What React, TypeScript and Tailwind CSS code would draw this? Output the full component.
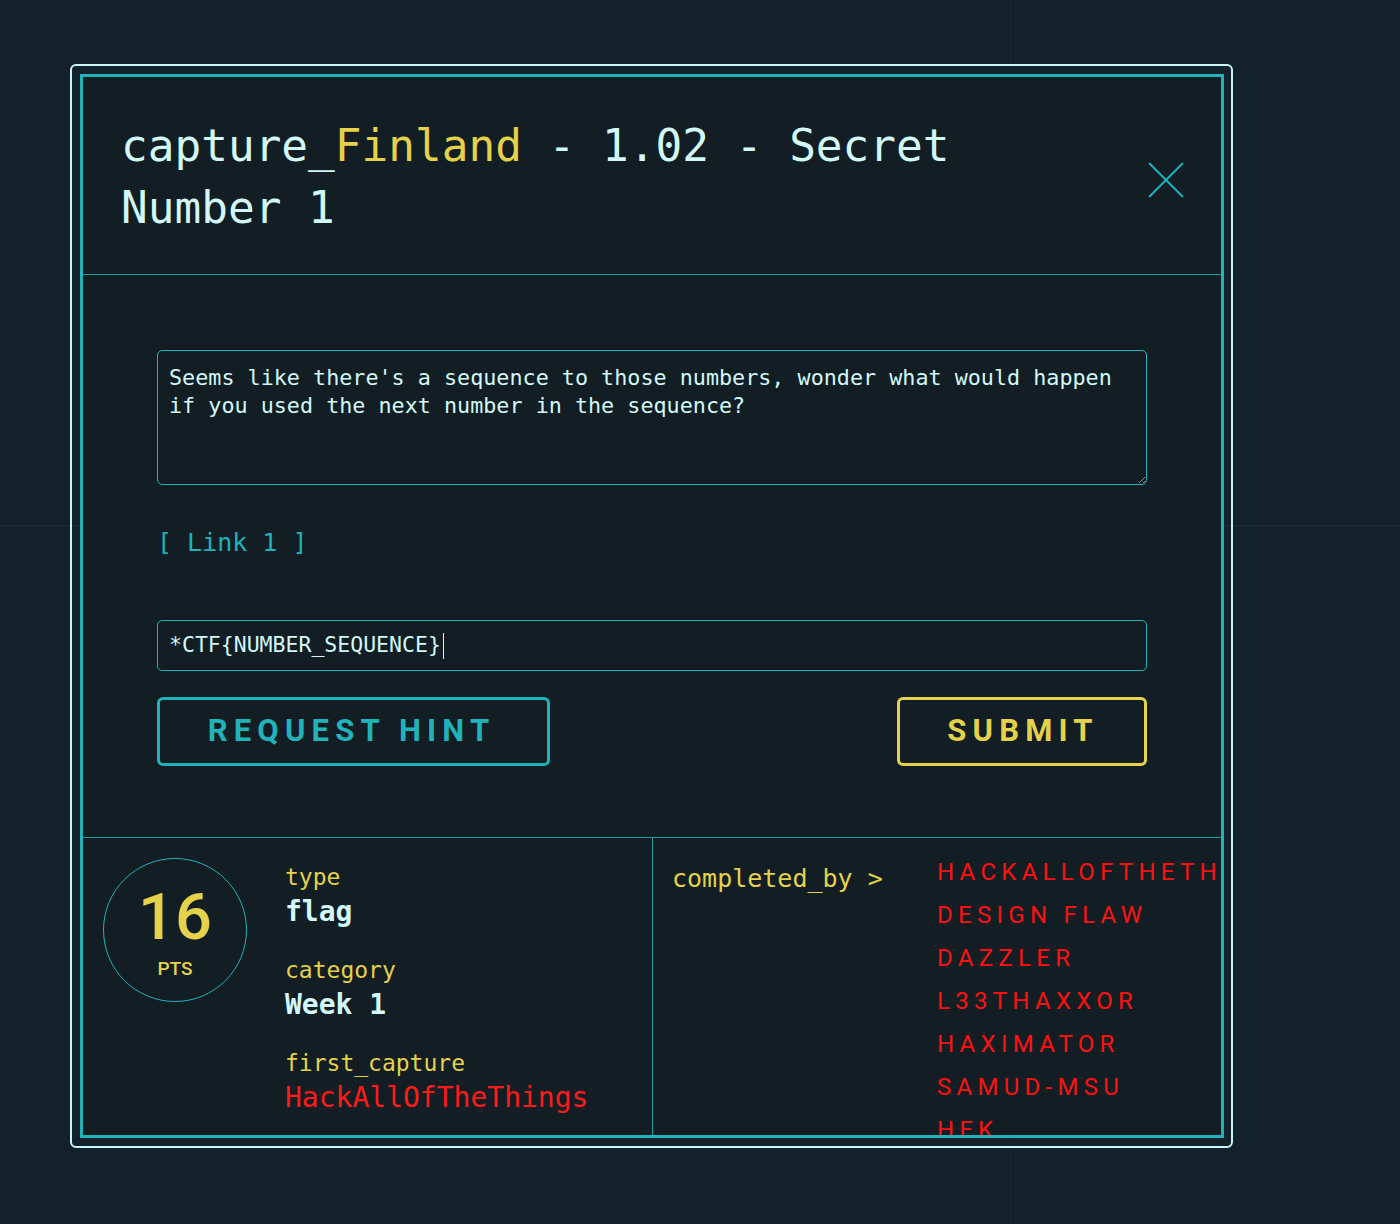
import React from 'react';

const mono = "font-['DejaVu_Sans_Mono','Liberation_Mono',monospace]";
const square = "font-['Roboto','DejaVu_Sans',sans-serif]";

const solvers = ['HACKALLOFTHETHINGS', 'DESIGN FLAW', 'DAZZLER', 'L33THAXXOR', 'HAXIMATOR', 'SAMUD-MSU', 'HFK'];

const InfoRow = ({ label, value, red }: { label: string; value: string; red?: boolean }) => (
  <div className="flex flex-col">
    <span className="text-[23px] leading-[28px] text-[#e6d24a]">{label}</span>
    <span className={`mt-[4px] text-[28px] leading-[34px] ${red ? 'text-[#ff1a1a]' : 'font-semibold text-[#d2f8f8]'}`}>
      {value}
    </span>
  </div>
);

export default function App() {
  return (
    <div
      className={`min-h-[1224px] w-full bg-[#13222a] bg-[linear-gradient(to_right,transparent_1010px,#172830_1010px,#172830_1011px,transparent_1011px),linear-gradient(to_bottom,transparent_525px,#172830_525px,#172830_527px,transparent_527px)] pt-[64px] pl-[70px] ${mono}`}
    >
      {/* outer frame */}
      <div className="w-[1163px] rounded-[6px] border-2 border-[#c9f5f6] p-2 pr-[7px]">
        <div className="flex flex-col border-[3px] border-[#21b2ba] bg-[#121e24]">
          {/* header */}
          <div className="flex h-[198px] items-start justify-between border-b border-[#1d9aa2] pl-[38px] pr-[37px] pt-[38px]">
            <h2 className="w-[860px] text-[44.4px] leading-[62px] text-[#d2f8f8]">
              capture_<span className="text-[#e6d24a]">Finland</span> - 1.02 - Secret Number 1
            </h2>
            <button className="mt-[47px] h-[36px] w-[36px] text-[#21b2ba]" aria-label="close">
              <svg viewBox="0 0 36 36" width="36" height="36" fill="none" stroke="currentColor" strokeWidth="2">
                <line x1="1" y1="1" x2="35" y2="35" />
                <line x1="35" y1="1" x2="1" y2="35" />
              </svg>
            </button>
          </div>

          {/* body */}
          <div className="flex h-[563px] flex-col border-b border-[#1d9aa2] px-[74px] pt-[75px]">
            <textarea
              readOnly
              defaultValue="Seems like there's a sequence to those numbers, wonder what would happen if you used the next number in the sequence?"
              className={`h-[135px] w-full resize-y rounded-[5px] border border-[#21b2ba] bg-transparent px-[11px] pt-[13px] text-[21.75px] leading-[28px] text-[#d2f8f8] outline-none ${mono}`}
            />
            <a className="mt-[42px] text-[25px] leading-[32px] text-[#21b2ba]">[ Link 1 ]</a>
            <div className="mt-[61px] flex h-[51px] items-center rounded-[5px] border border-[#21b2ba] px-[11px] text-[21.5px] text-[#d2f8f8]">
              *CTF{'{'}NUMBER_SEQUENCE{'}'}
              <span className="ml-[2px] h-[26px] w-px bg-[#d2f8f8]" />
            </div>
            <div className="mt-[26px] flex justify-between">
              <button
                className={`h-[69px] w-[393px] rounded-[6px] border-[3px] border-[#21b2ba] pr-[4px] text-[31px] font-bold tracking-[0.2em] text-[#21b2ba] ${square}`}
              >
                REQUEST HINT
              </button>
              <button
                className={`h-[69px] w-[250px] rounded-[6px] border-[3px] border-[#e6d24a] pl-[2px] text-[31px] font-bold tracking-[0.2em] text-[#e6d24a] ${square}`}
              >
                SUBMIT
              </button>
            </div>
          </div>

          {/* footer */}
          <div className="flex h-[297px] overflow-hidden">
            <div className="flex w-[570px] shrink-0 border-r border-[#1d9aa2] pl-[20px] pt-[20px]">
              <div className="flex h-[144px] w-[144px] shrink-0 flex-col items-center justify-center rounded-full border border-[#21b2ba] text-[#e6d24a]">
                <span className={`mt-[10px] text-[65px] font-medium leading-[60px] ${square}`}>16</span>
                <span className={`mt-[8px] text-[19px] font-medium ${square}`}>PTS</span>
              </div>
              <div className="ml-[38px] flex flex-col gap-[27px] pt-[5px]">
                <InfoRow label="type" value="flag" />
                <InfoRow label="category" value="Week 1" />
                <InfoRow label="first_capture" value="HackAllOfTheThings" red />
              </div>
            </div>
            <div className="flex min-w-0 flex-1 pl-[19px]">
              <span className="w-[265px] shrink-0 pt-[25px] text-[25px] leading-[32px] text-[#e6d24a]">completed_by &gt;</span>
              <ul className={`flex flex-col whitespace-nowrap pt-[13px] text-[24px] leading-[43px] tracking-[0.22em] text-[#ff1010] ${square}`}>
                {solvers.map((s) => (
                  <li key={s}>{s}</li>
                ))}
              </ul>
            </div>
          </div>
        </div>
      </div>
    </div>
  );
}
